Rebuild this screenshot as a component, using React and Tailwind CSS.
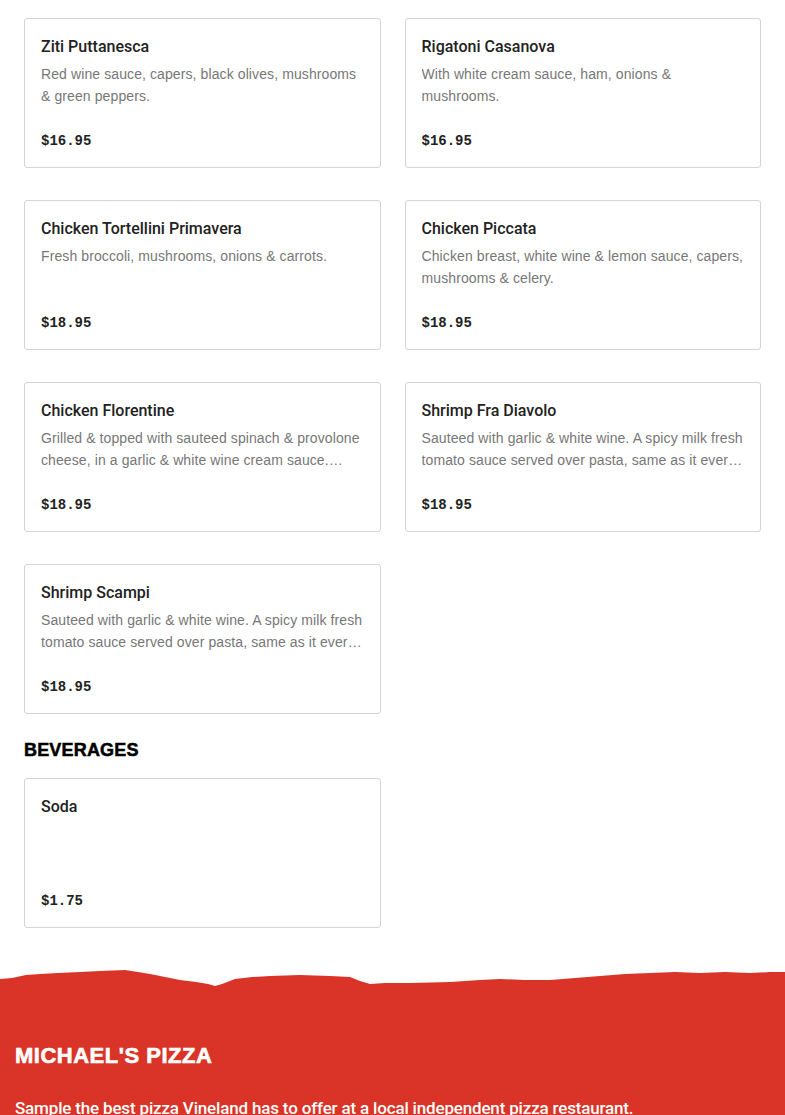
import React from "react";

const items = [
  {
    name: "Ziti Puttanesca",
    desc: "Red wine sauce, capers, black olives, mushrooms & green peppers.",
    price: "$16.95",
  },
  {
    name: "Rigatoni Casanova",
    desc: "With white cream sauce, ham, onions & mushrooms.",
    price: "$16.95",
  },
  {
    name: "Chicken Tortellini Primavera",
    desc: "Fresh broccoli, mushrooms, onions & carrots.",
    price: "$18.95",
  },
  {
    name: "Chicken Piccata",
    desc: "Chicken breast, white wine & lemon sauce, capers, mushrooms & celery.",
    price: "$18.95",
  },
  {
    name: "Chicken Florentine",
    desc: "Grilled & topped with sauteed spinach & provolone cheese, in a garlic & white wine cream sauce. Served over pasta.",
    price: "$18.95",
  },
  {
    name: "Shrimp Fra Diavolo",
    desc: "Sauteed with garlic & white wine. A spicy milk fresh tomato sauce served over pasta, same as it ever was.",
    price: "$18.95",
  },
  {
    name: "Shrimp Scampi",
    desc: "Sauteed with garlic & white wine. A spicy milk fresh tomato sauce served over pasta, same as it ever was.",
    price: "$18.95",
  },
];

const beverages = [{ name: "Soda", desc: "", price: "$1.75" }];

function MenuCard({ item }) {
  return (
    <div className="border border-[#d4d4d4] rounded-[3px] bg-white p-4">
      <h3 className="text-[16px] leading-6 font-medium text-[#222] font-['Roboto',sans-serif]">
        {item.name}
      </h3>
      <p className="h-11 mt-1 text-[14px] leading-[22px] tracking-[0.1px] text-[#777] line-clamp-2 font-['Liberation_Sans',sans-serif]">
        {item.desc}
      </p>
      <div className="mt-6 text-[14px] leading-5 font-bold text-[#222] font-['Liberation_Mono',monospace]">
        {item.price}
      </div>
    </div>
  );
}

function TornEdge() {
  return (
    <svg viewBox="0 0 785 22" className="block w-full h-[22px]" preserveAspectRatio="none">
      <path
        fill="#d93427"
        d="M0 11 L12 10 L26 7 L40 6 L58 5 L80 4 L100 3 L125 2 L138 4 L150 6 L165 9 L180 12 L196 14 L208 16 L215 18 L222 16 L235 11 L252 9 L270 8 L300 7 L330 8 L350 9 L360 13 L370 16 L385 15 L410 15 L450 14 L480 12 L500 11 L525 12 L550 12 L575 10 L600 8 L625 6 L650 5 L675 4 L700 5 L725 4 L750 5 L770 4 L785 4 L785 22 L0 22 Z"
      />
    </svg>
  );
}

export default function App() {
  return (
    <div className="min-h-screen bg-white">
      <div className="px-6 pt-[18px] pb-10">
        <div className="grid grid-cols-2 gap-x-6 gap-y-8">
          {items.map((item) => (
            <MenuCard key={item.name} item={item} />
          ))}
        </div>

        <h2 className="mt-6 mb-4 text-[18px] leading-6 font-extrabold text-black tracking-[0.01em] [-webkit-text-stroke:0.5px_black] font-['Liberation_Sans',sans-serif]">
          BEVERAGES
        </h2>
        <div className="grid grid-cols-2 gap-x-6 gap-y-8">
          {beverages.map((item) => (
            <MenuCard key={item.name} item={item} />
          ))}
        </div>
      </div>

      <TornEdge />
      <footer className="bg-[#d93427] px-[15px] pt-[52px] pb-10 text-white">
        <h2 className="text-[22px] leading-7 font-bold tracking-[0.5px] [-webkit-text-stroke:0.6px_white] font-['Liberation_Sans',sans-serif]">
          MICHAEL'S PIZZA
        </h2>
        <p className="mt-[26px] text-[17px] leading-6 font-medium font-['Roboto',sans-serif] tracking-[-0.01em]">
          Sample the best pizza Vineland has to offer at a local independent pizza restaurant.
        </p>
      </footer>
    </div>
  );
}
